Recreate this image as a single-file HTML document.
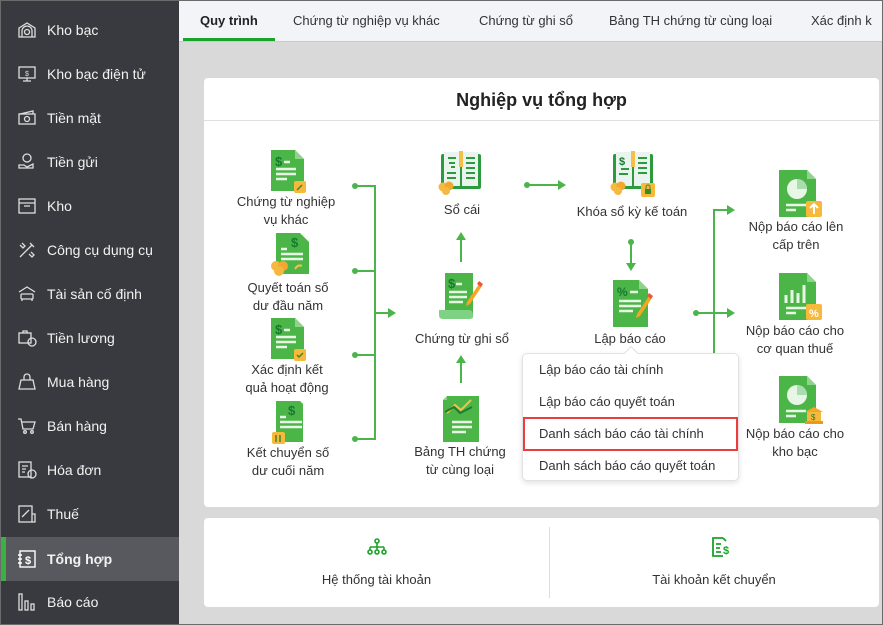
<!DOCTYPE html>
<html><head><meta charset="utf-8">
<style>
*{margin:0;padding:0;box-sizing:border-box}
body{width:883px;height:625px;overflow:hidden;font-family:"Liberation Sans","DejaVu Sans",sans-serif;background:#d9d9d9;position:relative;color:#222}
.frame{position:absolute;inset:0;border:1px solid #6b6b6b;pointer-events:none;z-index:50}
.side{position:absolute;left:0;top:0;width:179px;height:625px;background:#393a3f}
.si{position:absolute;left:0;width:179px;height:44px;color:#f2f2f2;font-size:14px;line-height:44px;padding-left:47px}
.si svg{position:absolute;left:17px;top:12px}
.si.act{background:#58595e;font-weight:bold}
.si.act:before{content:"";position:absolute;left:0;top:0;width:6px;height:100%;background:#3cb043}
.tabs{position:absolute;left:179px;top:0;width:704px;height:42px;background:#f3f4f8;border-bottom:1px solid #c9c9c9}
.tab{position:absolute;top:0;height:41px;line-height:41px;font-size:13px;color:#333;white-space:nowrap}
.tab.act{font-weight:bold;color:#222;border-bottom:3px solid #1aa32a}
.card{position:absolute;left:204px;top:78px;width:675px;height:429px;background:#fff;border-radius:4px}
.card h1{height:43px;line-height:45px;text-align:center;font-size:18px;font-weight:bold;border-bottom:1px solid #e0e0e0;color:#222}
.lbl{position:absolute;font-size:13px;line-height:18px;text-align:center;color:#333;white-space:nowrap;transform:translateX(-50%)}
.ic{position:absolute}
.ln{position:absolute;background:#4bb54b}
.dot{position:absolute;width:6px;height:6px;border-radius:50%;background:#4bb54b}
.ah{position:absolute;width:0;height:0}
.menu{position:absolute;left:522px;top:353px;width:217px;height:128px;background:#fff;border:1px solid #e2e2e2;border-radius:5px;box-shadow:0 2px 6px rgba(0,0,0,.12)}
.mi{position:absolute;left:16px;font-size:13px;color:#333;white-space:nowrap}
.red{position:absolute;left:523px;top:417px;width:215px;height:34px;border:2px solid #ee3b3b}
.bcard{position:absolute;left:204px;top:518px;width:675px;height:89px;background:#fff;border-radius:4px}
</style></head><body>
<div class="side">
 <div class="si" style="top:8px"><svg width="20" height="20" viewBox="0 0 20 20" fill="none" stroke="#ddd" stroke-width="1.3"><path d="M2 8L10 3l8 5v9H2z"/><path d="M5 17v-6a5 5 0 0 1 10 0v6"/><circle cx="10" cy="12" r="2.5"/></svg>Kho bạc</div>
 <div class="si" style="top:52px"><svg width="20" height="20" viewBox="0 0 20 20" fill="none" stroke="#ddd" stroke-width="1.3"><rect x="2" y="3" width="16" height="11"/><path d="M10 14v3M6 17h8"/><text x="8" y="12" font-size="7" fill="#ddd" stroke="none">$</text></svg>Kho bạc điện tử</div>
 <div class="si" style="top:96px"><svg width="20" height="20" viewBox="0 0 20 20" fill="none" stroke="#ddd" stroke-width="1.3"><rect x="2" y="6" width="16" height="10"/><path d="M3 6l13-3v3"/><circle cx="10" cy="11" r="2.5"/></svg>Tiền mặt</div>
 <div class="si" style="top:140px"><svg width="20" height="20" viewBox="0 0 20 20" fill="none" stroke="#ddd" stroke-width="1.3"><circle cx="10" cy="6" r="4"/><path d="M2 13h5l3 2 6-3v4H2z"/></svg>Tiền gửi</div>
 <div class="si" style="top:184px"><svg width="20" height="20" viewBox="0 0 20 20" fill="none" stroke="#ddd" stroke-width="1.3"><rect x="2" y="3" width="16" height="14"/><path d="M2 7h16M7 10h6"/></svg>Kho</div>
 <div class="si" style="top:228px"><svg width="20" height="20" viewBox="0 0 20 20" fill="none" stroke="#ddd" stroke-width="1.3"><path d="M3 17L15 5M5 3l3 3-2 2-3-3M14 12l3 3-2 2-3-3M13 3l4 4"/></svg>Công cụ dụng cụ</div>
 <div class="si" style="top:272px"><svg width="20" height="20" viewBox="0 0 20 20" fill="none" stroke="#ddd" stroke-width="1.3"><path d="M2 8l8-5 8 5"/><rect x="4" y="10" width="12" height="5" rx="1"/><path d="M5 15v2M15 15v2"/></svg>Tài sản cố định</div>
 <div class="si" style="top:316px"><svg width="20" height="20" viewBox="0 0 20 20" fill="none" stroke="#ddd" stroke-width="1.3"><rect x="2" y="5" width="12" height="10"/><path d="M6 5V3h4v2"/><circle cx="15" cy="14" r="4"/></svg>Tiền lương</div>
 <div class="si" style="top:360px"><svg width="20" height="20" viewBox="0 0 20 20" fill="none" stroke="#ddd" stroke-width="1.3"><path d="M2 17l2-9h12l2 9z"/><path d="M7 8V5a3 3 0 0 1 6 0v3"/></svg>Mua hàng</div>
 <div class="si" style="top:404px"><svg width="20" height="20" viewBox="0 0 20 20" fill="none" stroke="#ddd" stroke-width="1.3"><path d="M1 3h3l2 10h10l2-7H5"/><circle cx="8" cy="16" r="1.3"/><circle cx="15" cy="16" r="1.3"/></svg>Bán hàng</div>
 <div class="si" style="top:448px"><svg width="20" height="20" viewBox="0 0 20 20" fill="none" stroke="#ddd" stroke-width="1.3"><rect x="2" y="2" width="12" height="15"/><path d="M5 6h6M5 9h4M5 12h3"/><circle cx="15" cy="14" r="4"/></svg>Hóa đơn</div>
 <div class="si" style="top:492px"><svg width="20" height="20" viewBox="0 0 20 20" fill="none" stroke="#ddd" stroke-width="1.3"><rect x="2" y="2" width="13" height="16"/><path d="M5 13l7-7M15 10h3v8h-3"/></svg>Thuế</div>
 <div class="si act" style="top:537px"><svg width="20" height="20" viewBox="0 0 20 20" fill="none" stroke="#fff" stroke-width="1.4"><rect x="3" y="2" width="15" height="16"/><path d="M1 6h4M1 10h4M1 14h4"/><text x="8" y="15" font-size="11" fill="#fff" stroke="none" font-weight="bold">$</text></svg>Tổng hợp</div>
 <div class="si" style="top:580px"><svg width="20" height="20" viewBox="0 0 20 20" fill="none" stroke="#ddd" stroke-width="1.3"><rect x="2" y="2" width="3" height="16"/><rect x="8" y="9" width="3" height="9"/><rect x="14" y="12" width="3" height="6"/></svg>Báo cáo</div>
</div>

<div class="tabs">
 <div class="tab act" style="left:4px;padding:0 17px">Quy trình</div>
 <div class="tab" style="left:114px">Chứng từ nghiệp vụ khác</div>
 <div class="tab" style="left:300px">Chứng từ ghi sổ</div>
 <div class="tab" style="left:430px">Bảng TH chứng từ cùng loại</div>
 <div class="tab" style="left:632px">Xác định k</div>
</div>

<div class="card"><h1>Nghiệp vụ tổng hợp</h1></div>

<!-- doc icons col1 -->
<svg class="ic" style="left:268px;top:150px" width="42" height="44" viewBox="0 0 42 44"><path d="M3 0h24l9 9v32H3z" fill="#4cb548"/><path d="M27 0v9h9z" fill="#8fd48a"/><text x="7" y="16" font-size="13" font-weight="bold" fill="#167a2e">$</text><path d="M16 12h6M8 19h20M8 24h20M8 29h11" stroke="#e8f6e6" stroke-width="2.5"/><rect x="26" y="31" width="12" height="12" rx="2" fill="#f6b93b"/><path d="M29 40l5-5" stroke="#3a8a2a" stroke-width="1.5"/></svg>
<div class="lbl" style="left:286px;top:193px">Chứng từ nghiệp<br>vụ khác</div>
<svg class="ic" style="left:270px;top:233px" width="42" height="44" viewBox="0 0 42 44"><path d="M6 0h24l9 9v32H6z" fill="#4cb548"/><text x="21" y="14" font-size="13" font-weight="bold" fill="#167a2e">$</text><path d="M11 16h6M11 21h22M11 26h22" stroke="#e8f6e6" stroke-width="2.5"/><circle cx="6" cy="33" r="5" fill="#f5b841"/><circle cx="13" cy="33" r="5" fill="#f0a830"/><circle cx="9" cy="38" r="5" fill="#f5b841"/><path d="M25 36q3-5 7-3" stroke="#f5c04a" stroke-width="2" fill="none"/></svg>
<div class="lbl" style="left:288px;top:279px">Quyết toán số<br>dư đầu năm</div>
<svg class="ic" style="left:268px;top:318px" width="42" height="44" viewBox="0 0 42 44"><path d="M3 0h24l9 9v32H3z" fill="#4cb548"/><path d="M27 0v9h9z" fill="#8fd48a"/><text x="7" y="16" font-size="13" font-weight="bold" fill="#167a2e">$</text><path d="M16 12h6M8 19h20M8 24h20M8 29h11" stroke="#e8f6e6" stroke-width="2.5"/><rect x="26" y="31" width="12" height="12" rx="2" fill="#f6b93b"/><path d="M29 37l2 2 4-4" stroke="#3a8a2a" stroke-width="1.5" fill="none"/></svg>
<div class="lbl" style="left:287px;top:361px">Xác định kết<br>quả hoạt động</div>
<svg class="ic" style="left:270px;top:401px" width="42" height="44" viewBox="0 0 42 44"><path d="M6 0h24l3 3v38H6z" fill="#4cb548"/><text x="18" y="14" font-size="13" font-weight="bold" fill="#167a2e">$</text><path d="M10 16h6M10 21h22M10 26h22" stroke="#e8f6e6" stroke-width="2.5"/><rect x="2" y="31" width="13" height="12" rx="2" fill="#f6b93b"/><path d="M6 34v7M10 34v7" stroke="#3a8a2a" stroke-width="1.5"/></svg>
<div class="lbl" style="left:288px;top:444px">Kết chuyển số<br>dư cuối năm</div>

<!-- connector col1 -->
<div class="dot" style="left:352px;top:183px"></div><div class="ln" style="left:355px;top:185px;width:20px;height:2px"></div>
<div class="dot" style="left:352px;top:268px"></div><div class="ln" style="left:355px;top:270px;width:20px;height:2px"></div>
<div class="dot" style="left:352px;top:352px"></div><div class="ln" style="left:355px;top:354px;width:20px;height:2px"></div>
<div class="dot" style="left:352px;top:436px"></div><div class="ln" style="left:355px;top:438px;width:20px;height:2px"></div>
<div class="ln" style="left:374px;top:185px;width:2px;height:255px"></div>
<div class="ln" style="left:375px;top:312px;width:14px;height:2px"></div>
<div class="ah" style="left:388px;top:308px;border-left:8px solid #4bb54b;border-top:5px solid transparent;border-bottom:5px solid transparent"></div>

<!-- col2 -->
<svg class="ic" style="left:437px;top:151px" width="48" height="44" viewBox="0 0 48 44"><rect x="4" y="3" width="40" height="35" rx="2" fill="#2e9a3e"/><path d="M7 1h16v34H7zM25 1h16v34H25z" fill="#e9f4ef"/><rect x="22" y="0" width="4" height="16" fill="#f5c04a"/><path d="M11 7h8M12 12h6M14 16h4M29 7h9M29 12h9M29 17h9M29 22h9M10 22h9M10 27h9M29 27h9" stroke="#2e9a3e" stroke-width="2"/><circle cx="6" cy="36" r="4.5" fill="#f5b841"/><circle cx="12" cy="35" r="4.5" fill="#f0a830"/><circle cx="9" cy="40" r="4" fill="#f5b841"/></svg>
<div class="lbl" style="left:462px;top:201px">Sổ cái</div>
<div class="ln" style="left:460px;top:238px;width:2px;height:24px"></div>
<div class="ah" style="left:456px;top:232px;border-bottom:8px solid #4bb54b;border-left:5px solid transparent;border-right:5px solid transparent"></div>
<svg class="ic" style="left:437px;top:270px" width="50" height="52" viewBox="0 0 50 52"><path d="M8 3h28v44H8z" fill="#4cb548"/><path d="M2 40h30q4 0 4 6v1q0 2-4 2H6q-4 0-4-4z" fill="#7fd183"/><text x="11" y="18" font-size="13" font-weight="bold" fill="#167a2e">$</text><path d="M19 14h6M12 22h18M12 27h18M12 32h14" stroke="#e8f6e6" stroke-width="2.5"/><path d="M30 32l12-18 3 2-12 18-4 2z" fill="#f5a623"/><path d="M40 14l2-3 4 3-2 3z" fill="#e9573f"/></svg>
<div class="lbl" style="left:462px;top:330px">Chứng từ ghi sổ</div>
<div class="ln" style="left:460px;top:361px;width:2px;height:22px"></div>
<div class="ah" style="left:456px;top:355px;border-bottom:8px solid #4bb54b;border-left:5px solid transparent;border-right:5px solid transparent"></div>
<svg class="ic" style="left:442px;top:395px" width="40" height="48" viewBox="0 0 40 48"><path d="M5 1h32v46H1V5z" fill="#4cb548"/><path d="M1 5h4V1z" fill="#8fd48a"/><path d="M5 18l8-8 6 5 10-10" stroke="#f5c04a" stroke-width="2" fill="none"/><path d="M3 17l9-5 6 6 12-6" stroke="#1e7d2e" stroke-width="2" fill="none"/><path d="M10 27h20M10 32h20M10 37h14" stroke="#e8f6e6" stroke-width="2.5"/></svg>
<div class="lbl" style="left:460px;top:443px">Bảng TH chứng<br>từ cùng loại</div>

<!-- arrow col2->col3 -->
<div class="dot" style="left:524px;top:182px"></div><div class="ln" style="left:527px;top:184px;width:32px;height:2px"></div>
<div class="ah" style="left:558px;top:180px;border-left:8px solid #4bb54b;border-top:5px solid transparent;border-bottom:5px solid transparent"></div>

<!-- col3 -->
<svg class="ic" style="left:609px;top:151px" width="52" height="48" viewBox="0 0 52 48"><rect x="4" y="3" width="40" height="35" rx="2" fill="#2e9a3e"/><path d="M7 1h16v34H7zM25 1h16v34H25z" fill="#e9f4ef"/><rect x="22" y="0" width="4" height="16" fill="#f5c04a"/><text x="10" y="14" font-size="11" font-weight="bold" fill="#167a2e">$</text><path d="M12 18h8M10 23h9M29 7h9M29 12h9M29 17h9M29 22h9" stroke="#2e9a3e" stroke-width="2"/><circle cx="6" cy="36" r="4.5" fill="#f5b841"/><circle cx="12" cy="35" r="4.5" fill="#f0a830"/><circle cx="9" cy="40" r="4" fill="#f5b841"/><rect x="32" y="32" width="14" height="14" rx="2" fill="#f6b93b"/><rect x="36" y="38" width="6" height="5" fill="#3a8a2a"/><path d="M37 38v-2a2 2 0 0 1 4 0v2" stroke="#3a8a2a" fill="none"/></svg>
<div class="lbl" style="left:632px;top:203px">Khóa sổ kỳ kế toán</div>
<div class="dot" style="left:628px;top:239px"></div><div class="ln" style="left:630px;top:242px;width:2px;height:22px"></div>
<div class="ah" style="left:626px;top:263px;border-top:8px solid #4bb54b;border-left:5px solid transparent;border-right:5px solid transparent"></div>
<svg class="ic" style="left:611px;top:280px" width="48" height="48" viewBox="0 0 48 48"><path d="M2 0h26l9 9v38H2z" fill="#4cb548"/><path d="M28 0v9h9z" fill="#8fd48a"/><text x="6" y="16" font-size="12" font-weight="bold" fill="#167a2e">%</text><path d="M19 12h8M8 21h22M8 26h22M8 31h14" stroke="#e8f6e6" stroke-width="2.5"/><path d="M26 34l12-18 3 2-12 18-4 2z" fill="#f5a623"/><path d="M36 16l2-3 4 3-2 3z" fill="#e9573f"/></svg>
<div class="lbl" style="left:630px;top:330px">Lập báo cáo</div>

<!-- connector col3->col4 -->
<div class="dot" style="left:693px;top:310px"></div><div class="ln" style="left:696px;top:312px;width:32px;height:2px"></div>
<div class="ln" style="left:713px;top:209px;width:2px;height:210px"></div>
<div class="ln" style="left:713px;top:209px;width:15px;height:2px"></div>
<div class="ah" style="left:727px;top:205px;border-left:8px solid #4bb54b;border-top:5px solid transparent;border-bottom:5px solid transparent"></div>
<div class="ah" style="left:727px;top:308px;border-left:8px solid #4bb54b;border-top:5px solid transparent;border-bottom:5px solid transparent"></div>

<!-- col4 -->
<svg class="ic" style="left:778px;top:170px" width="46" height="50" viewBox="0 0 46 50"><path d="M1 0h28l9 9v38H1z" fill="#4cb548"/><path d="M29 0v9h9z" fill="#8fd48a"/><circle cx="19" cy="19" r="10" fill="#e8f6e6"/><path d="M19 9v10h10a10 10 0 0 0-10-10z" fill="#a9ddb0"/><path d="M8 35h20M8 40h10" stroke="#e8f6e6" stroke-width="2.5"/><rect x="28" y="31" width="16" height="16" rx="2" fill="#f6b93b"/><path d="M36 44v-9M32 38l4-4 4 4" stroke="#fff" stroke-width="2" fill="none"/></svg>
<div class="lbl" style="left:796px;top:218px">Nộp báo cáo lên<br>cấp trên</div>
<svg class="ic" style="left:778px;top:273px" width="46" height="50" viewBox="0 0 46 50"><path d="M1 0h28l9 9v38H1z" fill="#4cb548"/><path d="M29 0v9h9z" fill="#8fd48a"/><path d="M8 30V22M14 30V17M20 30V20M26 30V12" stroke="#e8f6e6" stroke-width="3"/><path d="M8 35h20M8 40h10" stroke="#e8f6e6" stroke-width="2.5"/><rect x="28" y="31" width="16" height="16" rx="2" fill="#f6b93b"/><text x="31" y="44" font-size="11" font-weight="bold" fill="#fff">%</text></svg>
<div class="lbl" style="left:795px;top:322px">Nộp báo cáo cho<br>cơ quan thuế</div>
<svg class="ic" style="left:778px;top:376px" width="46" height="50" viewBox="0 0 46 50"><path d="M1 0h28l9 9v38H1z" fill="#4cb548"/><path d="M29 0v9h9z" fill="#8fd48a"/><circle cx="19" cy="19" r="10" fill="#e8f6e6"/><path d="M19 9v10h10a10 10 0 0 0-10-10z" fill="#a9ddb0"/><path d="M8 35h20M8 40h10" stroke="#e8f6e6" stroke-width="2.5"/><path d="M27 36l9-5 9 5z" fill="#f6a623"/><rect x="29" y="36" width="14" height="10" fill="#f6b93b"/><rect x="27" y="45" width="18" height="3" fill="#e99a1c"/><text x="33" y="44" font-size="8" fill="#2e7a2e">$</text></svg>
<div class="lbl" style="left:795px;top:425px">Nộp báo cáo cho<br>kho bạc</div>

<!-- dropdown -->
<div class="menu">
 <div class="mi" style="top:8px">Lập báo cáo tài chính</div>
 <div class="mi" style="top:40px">Lập báo cáo quyết toán</div>
 <div class="mi" style="top:72px">Danh sách báo cáo tài chính</div>
 <div class="mi" style="top:104px">Danh sách báo cáo quyết toán</div>
</div>
<div style="position:absolute;left:626px;top:348px;width:10px;height:10px;background:#fff;border-left:1px solid #e2e2e2;border-top:1px solid #e2e2e2;transform:rotate(45deg)"></div>
<div class="red"></div>

<!-- bottom card -->
<div class="bcard">
 <div style="position:absolute;left:345px;top:9px;width:1px;height:71px;background:#ddd"></div>
 <svg style="position:absolute;left:163px;top:20px" width="20" height="18" viewBox="0 0 20 18" fill="none" stroke="#1aa32a" stroke-width="1.6"><circle cx="10" cy="3" r="2"/><path d="M10 5v4M3 9h14M3 9v3M10 9v3M17 9v3"/><circle cx="3" cy="14" r="2"/><circle cx="10" cy="14" r="2"/><circle cx="17" cy="14" r="2"/></svg>
 <div style="position:absolute;left:0;width:345px;top:54px;text-align:center;font-size:13px;color:#333">Hệ thống tài khoản</div>
 <svg style="position:absolute;left:507px;top:18px" width="20" height="22" viewBox="0 0 20 22" fill="none" stroke="#1aa32a" stroke-width="1.8"><path d="M12 2H2v18h10"/><path d="M12 2l3 3"/><path d="M5 8h5M5 12h4M5 16h5"/><text x="12" y="18" font-size="11" font-weight="bold" fill="#1aa32a" stroke="none">$</text></svg>
 <div style="position:absolute;left:345px;width:330px;top:54px;text-align:center;font-size:13px;color:#333">Tài khoản kết chuyển</div>
</div>
<div class="frame"></div>
</body></html>
